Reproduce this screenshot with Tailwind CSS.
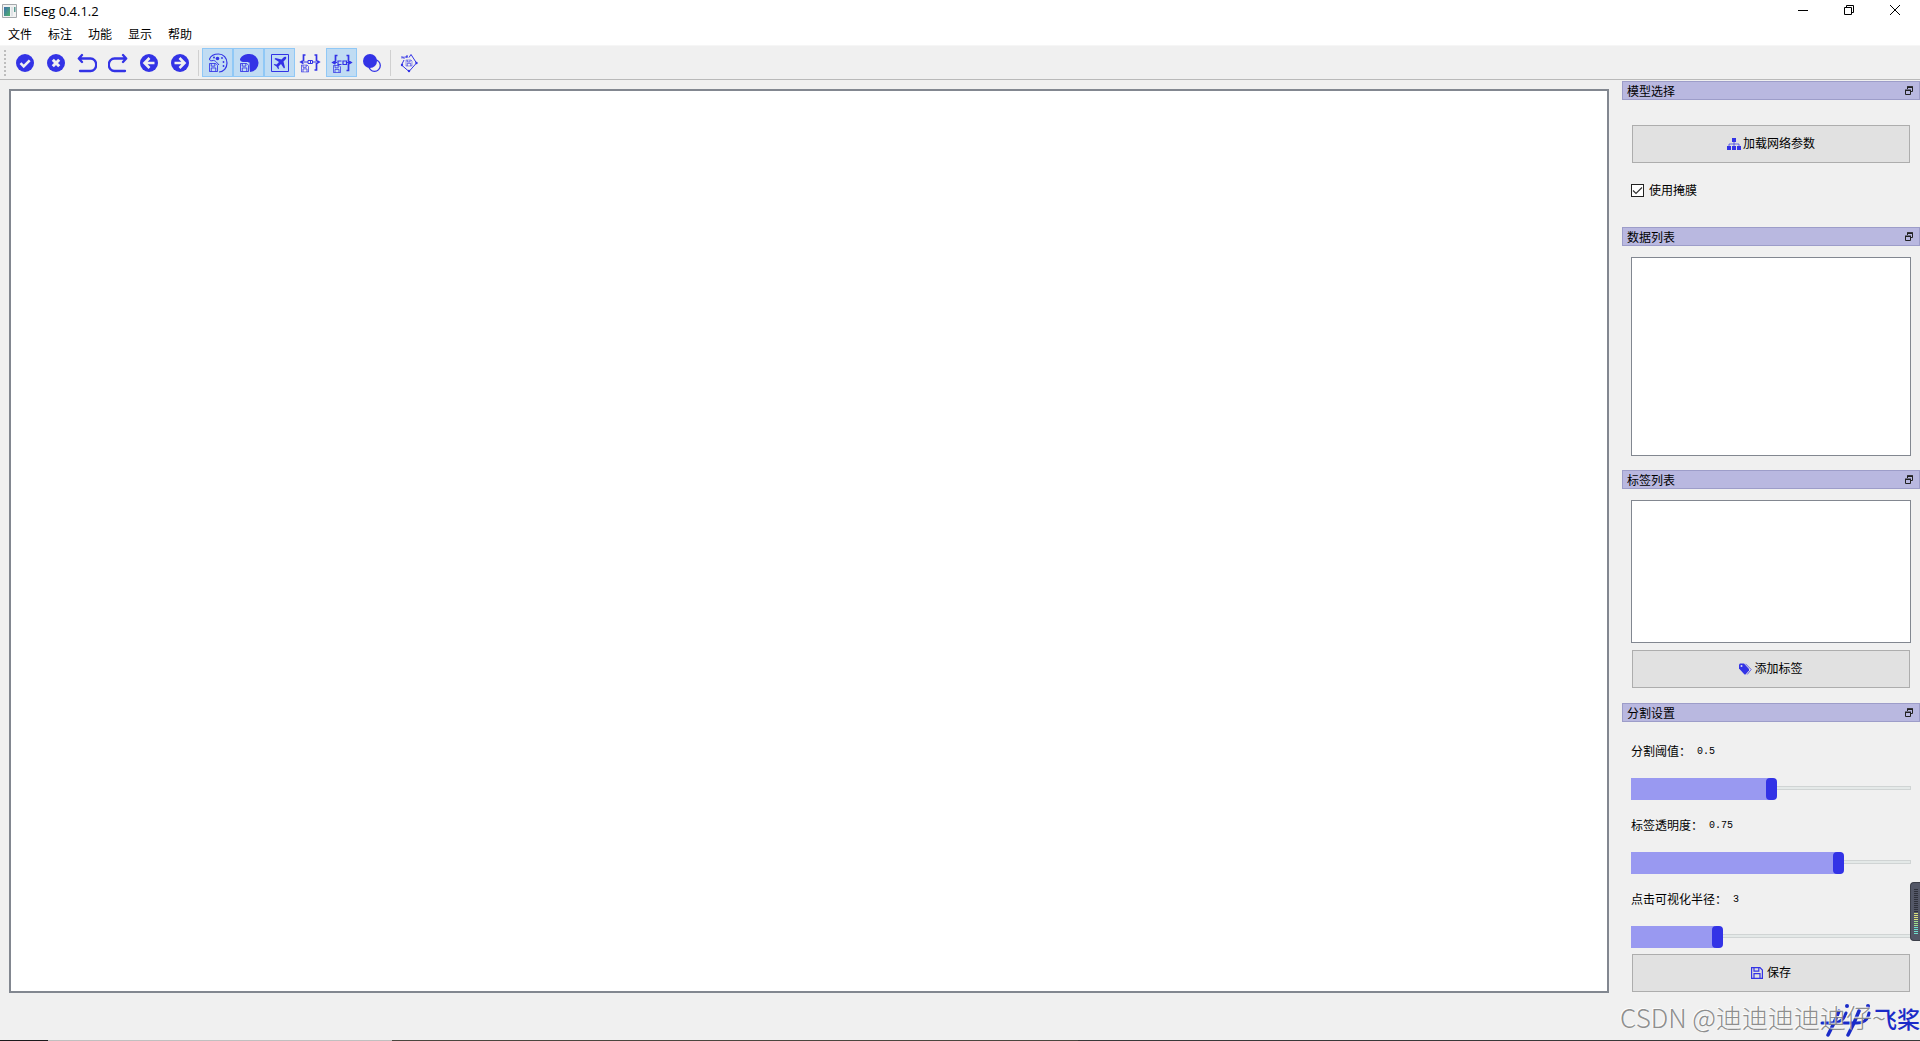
<!DOCTYPE html>
<html lang="zh-CN">

<head>
  <meta charset="UTF-8">
  <meta name="viewport" content="width=device-width, initial-scale=1.0">
  <title>EISeg 0.4.1.2</title>
  <script src="https://cdn.jsdelivr.net/npm/@tailwindcss/browser@4"></script>
</head>

<body class="min-h-screen flex flex-col bg-[#f0f0f0] text-black text-[12px] leading-4 font-['Liberation_Sans','Noto_Sans_CJK_SC',sans-serif]">

  <!-- Shared icon shapes -->
  <svg class="hidden">
    <symbol id="disk" viewBox="0 0 10 10">
      <path d="M.5.5h7l2 2v7h-9zM2.500.5v3h4v-3M2.500 9.500v-4h5v4" fill="none" stroke="#3333e6" stroke-width="1" />
    </symbol>
    <symbol id="float" viewBox="0 0 8 9">
      <path d="M2.500 3V1h5v4.500H6M2 1h6M.5 4.500h5v4h-5zM0 4.500h6" fill="none" stroke="#222" stroke-width="1" />
      <path d="M2 .5h6v1.500H2zM0 3.500h6V5H0z" fill="#222" />
    </symbol>
  </svg>

  <!-- Title bar -->
  <header class="flex h-[22px] items-start bg-white">
    <div class="flex items-center gap-1.5 pl-0.5 pt-[3px]">
      <svg class="w-[15px] h-[14px]" viewBox="0 0 15 14">
        <defs>
          <linearGradient id="app" x1="0" y1="0" x2="1" y2="1">
            <stop offset="0" stop-color="#3f6fae" />
            <stop offset="1" stop-color="#4fb36a" />
          </linearGradient>
        </defs>
        <path d="M.5.5h14v13H.5z" fill="#f2f2f2" stroke="#a5a9ad" />
        <path d="M2 3h6v9H2z" fill="url(#app)" />
        <path d="M9 3h2v9H9z" fill="#dfe3e6" />
        <path d="M12 3h1.500v5H12z" fill="#5a9c94" />
      </svg>
      <h1 class="text-[13px] font-['Open_Sans',sans-serif]">EISeg 0.4.1.2</h1>
    </div>
    <div class="ml-auto flex pr-0.5">
      <button class="flex w-[46px] h-5 items-center justify-center" aria-label="最小化">
        <svg class="w-[10px] h-[10px]" viewBox="0 0 10 10"><path d="M0 5.500h10" stroke="#000" /></svg>
      </button>
      <button class="flex w-[46px] h-5 items-center justify-center" aria-label="还原">
        <svg class="w-[10px] h-[10px]" viewBox="0 0 10 10"><path d="M.5 2.500h7v7h-7zM2.500 2.500v-2h7v7h-2" fill="none" stroke="#000" /></svg>
      </button>
      <button class="flex w-[46px] h-5 items-center justify-center" aria-label="关闭">
        <svg class="w-[10px] h-[10px]" viewBox="0 0 10 10"><path d="M0 0l10 10M10 0L0 10" stroke="#000" /></svg>
      </button>
    </div>
  </header>

  <!-- Menu bar -->
  <nav class="flex h-[23px] items-center gap-4 bg-white px-2 pt-0.5">
    <button>文件</button>
    <button>标注</button>
    <button>功能</button>
    <button>显示</button>
    <button>帮助</button>
  </nav>

  <!-- Toolbar -->
  <div class="flex h-[35px] items-center border-t border-b border-t-[#f6f6f6] border-b-[#b9b9b9] pl-1">
    <svg class="w-1.5 h-[26px]" viewBox="0 0 6 26"><path d="M1 0v26" stroke="#bdbdbd" stroke-width="2" stroke-dasharray="2 2" /></svg>
    <button class="flex w-[31px] h-[29px] items-center justify-center pr-0.5" aria-label="完成">
      <svg class="w-[18px] h-[18px]" viewBox="0 0 18 18">
        <circle cx="9" cy="9" r="9" fill="#3333e6" />
        <path d="M4.500 9.200l3.200 3.200 6-6" fill="none" stroke="#f0f0f0" stroke-width="2.600" />
      </svg>
    </button>
    <button class="flex w-[31px] h-[29px] items-center justify-center pr-0.5" aria-label="清除">
      <svg class="w-[18px] h-[18px]" viewBox="0 0 18 18">
        <circle cx="9" cy="9" r="9" fill="#3333e6" />
        <path d="M5.800 5.800l6.400 6.400M12.200 5.800l-6.400 6.400" stroke="#f0f0f0" stroke-width="3" />
      </svg>
    </button>
    <button class="flex w-[31px] h-[29px] items-center justify-center pr-0.5" aria-label="撤销">
      <svg class="w-[20px] h-[20px]" viewBox="0 0 20 20" fill="none" stroke="#3333e6" stroke-width="2.300" stroke-linecap="round" stroke-linejoin="round">
        <path d="M5 2L1.800 5.500 5 9M2 5.500h11.500a5.500 6 0 0 1 0 12.500H3" />
      </svg>
    </button>
    <button class="flex w-[31px] h-[29px] items-center justify-center pr-0.5" aria-label="重做">
      <svg class="w-[20px] h-[20px]" viewBox="0 0 20 20" fill="none" stroke="#3333e6" stroke-width="2.300" stroke-linecap="round" stroke-linejoin="round">
        <path d="M15 2l3.200 3.500L15 9M18 5.500H6.500a5.500 6 0 0 0 0 12.500H17" />
      </svg>
    </button>
    <button class="flex w-[31px] h-[29px] items-center justify-center pr-0.5" aria-label="上一张">
      <svg class="w-[18px] h-[18px]" viewBox="0 0 18 18">
        <circle cx="9" cy="9" r="9" fill="#3333e6" />
        <path d="M9.500 4L4.500 9l5 5M5 9h9.500" fill="none" stroke="#f0f0f0" stroke-width="2.600" />
      </svg>
    </button>
    <button class="flex w-[31px] h-[29px] items-center justify-center pr-0.5" aria-label="下一张">
      <svg class="w-[18px] h-[18px]" viewBox="0 0 18 18">
        <circle cx="9" cy="9" r="9" fill="#3333e6" />
        <path d="M8.500 4l5 5-5 5M13 9H3.500" fill="none" stroke="#f0f0f0" stroke-width="2.600" />
      </svg>
    </button>
    <span class="ml-0.5 mr-[3px] w-px h-[26px] bg-[#d0d0d0]"></span>
    <button class="flex w-[31px] h-[29px] items-center justify-center border border-[#90c8f6] bg-[#c0dcf3]" aria-label="保存伪彩色图像" aria-pressed="true">
      <svg class="w-[20px] h-[20px]" viewBox="0 0 20 20">
        <path d="M1.500 6C3 2.500 7 1 10.500 1c5 0 8.500 4 8.500 9s-3.500 9-8 9" fill="none" stroke="#3333e6" stroke-width="1.200" />
        <path d="M1.500 6c0 2 2 2 3.500 1.500S8.500 9 11 12" fill="none" stroke="#3333e6" />
        <g fill="#3333e6">
          <circle cx="6" cy="4.500" r="1" />
          <circle cx="9.500" cy="5.500" r="1.800" />
          <circle cx="14" cy="5" r=".9" />
          <circle cx="15.500" cy="9" r=".9" />
          <circle cx="15.500" cy="13" r=".9" />
        </g>
        <use href="#disk" x="1" y="10" width="9" height="9" />
      </svg>
    </button>
    <button class="flex w-[31px] h-[29px] items-center justify-center border border-[#90c8f6] bg-[#c0dcf3]" aria-label="保存灰度图像" aria-pressed="true">
      <svg class="w-[20px] h-[20px]" viewBox="0 0 20 20">
        <path d="M1 6C3 2 7 1 10 1a9 9 0 0 1 1 18L9 9C6 9 1 10 1 6z" fill="#3333e6" />
        <path d="M0 9.500h10.500V20H0z" fill="#c0dcf3" />
        <use href="#disk" x="1" y="10" width="9" height="9" />
      </svg>
    </button>
    <button class="flex w-[31px] h-[29px] items-center justify-center border border-[#90c8f6] bg-[#c0dcf3]" aria-label="保存抠图图像" aria-pressed="true">
      <svg class="w-[18px] h-[18px]" viewBox="0 0 18 18">
        <path d="M.5.5h17v17H.5z" fill="none" stroke="#3333e6" />
        <path d="M15 3c-1-.7-2 0-3 1l-1.500 1.500L4.500 4 3.500 5l4.500 3-2.500 2.500L3.500 10l-.8.800L5.500 12.500 7.200 15.300l.8-.8-.5-2L10 10l3 4.500 1-1-1.500-6L14 6c1-1 1.700-2 1-3z" fill="#3333e6" />
      </svg>
    </button>
    <button class="flex w-[31px] h-[29px] items-center justify-center pr-0.5" aria-label="保存JSON">
      <svg class="w-[22px] h-[20px]" viewBox="0 0 22 20" fill="none">
        <path d="M6.500 2H4.500v5.500L2 9l2.500 1.500M15.500 2h2v5.500L20 9l-2.500 1.500V17h-2" stroke="#3333e6" stroke-width="1.700" />
        <path d="M5 9h4M13.500 9H17M9 7.500h4.500v3H9zM11.500 7.500v3" stroke="#3333e6" />
        <use href="#disk" x="2" y="11.500" width="8" height="8" />
      </svg>
    </button>
    <button class="flex w-[31px] h-[29px] items-center justify-center border border-[#90c8f6] bg-[#c0dcf3]" aria-label="保存COCO" aria-pressed="true">
      <svg class="w-[22px] h-[20px]" viewBox="0 0 22 20" fill="none">
        <path d="M6.500 2.500h-2V8L2 9.500 4.500 11M15.500 2.500h2V8L20 9.500 17.500 11v6.500h-2" stroke="#3333e6" stroke-width="1.700" />
        <path d="M1 9.500h5M10.500 8H7v3.500h3.500M12 8h3.500v3.500H12zM16 9.500h5" stroke="#3333e6" stroke-width="1.200" />
        <use href="#disk" x="2" y="12" width="8" height="8" />
      </svg>
    </button>
    <button class="flex w-[31px] h-[29px] items-center justify-center pr-0.5" aria-label="去背景">
      <svg class="w-[18px] h-[18px]" viewBox="0 0 18 18">
        <circle cx="11.500" cy="11.500" r="5.800" fill="#f0f0f0" stroke="#3333e6" stroke-width="1.300" />
        <circle cx="7" cy="7" r="7" fill="#3333e6" />
      </svg>
    </button>
    <span class="ml-0.5 mr-[3px] w-px h-[26px] bg-[#d0d0d0]"></span>
    <button class="flex w-[31px] h-[29px] items-center justify-center pr-0.5" aria-label="保存">
      <svg class="w-[18px] h-[20px]" viewBox="0 0 18 20" fill="none">
        <path d="M11 1.500L16.500 10 9 18.500 1.500 12 4 7" stroke="#3333e6" stroke-width="1" />
        <path d="M2 5.500v-2l2 2v-2M6 5V3h2M6 4h2M9 4.500l2-3" stroke="#3333e6" stroke-width="1" />
        <circle cx="2" cy="12" r="1.200" fill="#3333e6" />
        <circle cx="9" cy="18" r="1.200" fill="#3333e6" />
        <circle cx="16.500" cy="10" r="1.200" fill="#3333e6" />
        <use href="#disk" x="5.500" y="6.500" width="7" height="7" />
      </svg>
    </button>
  </div>

  <main class="flex flex-1">
    <!-- Canvas -->
    <section class="mt-[9px] ml-[9px] mr-[13px] min-w-0 flex-1 border-2 border-[#828790] bg-white" aria-label="画布"></section>

    <!-- Dock panels -->
    <aside class="w-[298px] shrink-0 pt-px">
      <section>
        <div class="flex h-[19px] items-center justify-between border border-[#9d9dc9] bg-[#b9b8e0] pl-1 pr-1.5">
          <h2 class="pt-0.5">模型选择</h2>
          <button aria-label="浮动"><svg class="w-2 h-[9px]"><use href="#float" /></svg></button>
        </div>
        <div class="px-[10px] pt-[25px] pb-[30px]">
          <button class="flex w-full h-[38px] items-center justify-center gap-0.5 border border-[#adadad] bg-[#e1e1e1]">
            <svg class="w-[14px] h-3" viewBox="0 0 14 12">
              <path d="M5 0h4v4H5zM0 8h4v4H0zM5 8h4v4H5zM10 8h4v4h-4z" fill="#3333e6" />
              <path d="M7 4v4M2 8V6h10v2" fill="none" stroke="#3333e6" stroke-opacity=".7" />
            </svg>
            加载网络参数
          </button>
          <label class="mt-[21px] -ml-px flex h-[13px] items-center gap-[5px]">
            <span class="grid">
              <input type="checkbox" checked class="peer [grid-area:1/1] w-[13px] h-[13px] appearance-none border border-[#222] bg-white">
              <svg class="[grid-area:1/1] hidden peer-checked:block w-[13px] h-[13px] pointer-events-none" viewBox="0 0 13 13"><path d="M2 6.500L5 9.500l6-6" fill="none" stroke="#333" stroke-width="1.200" /></svg>
            </span>
            使用掩膜
          </label>
        </div>
      </section>

      <section>
        <div class="flex h-[19px] items-center justify-between border border-[#9d9dc9] bg-[#b9b8e0] pl-1 pr-1.5">
          <h2 class="pt-0.5">数据列表</h2>
          <button aria-label="浮动"><svg class="w-2 h-[9px]"><use href="#float" /></svg></button>
        </div>
        <div class="px-[9px] pt-[11px] pb-[14px]">
          <ul class="h-[199px] border border-[#828790] bg-white"></ul>
        </div>
      </section>

      <section>
        <div class="flex h-[19px] items-center justify-between border border-[#9d9dc9] bg-[#b9b8e0] pl-1 pr-1.5">
          <h2 class="pt-0.5">标签列表</h2>
          <button aria-label="浮动"><svg class="w-2 h-[9px]"><use href="#float" /></svg></button>
        </div>
        <div class="px-[9px] pt-[11px] pb-[15px]">
          <ul class="h-[143px] border border-[#828790] bg-white"></ul>
          <div class="px-px pt-[7px]">
            <button class="flex w-full h-[38px] items-center justify-center gap-0.5 border border-[#adadad] bg-[#e1e1e1]">
              <svg class="w-[13px] h-3" viewBox="0 0 13 12">
                <path d="M0 1.500L1 .5h4l5 5.500v1.500L6.500 11.500H5.500L0 5.500z" fill="#3333e6" />
                <path d="M6.500.8l5.700 5.700-4 5" fill="none" stroke="#3333e6" stroke-opacity=".7" />
                <circle cx="2.500" cy="3" r="1" fill="#e1e1e1" />
              </svg>
              添加标签
            </button>
          </div>
        </div>
      </section>

      <section>
        <div class="flex h-[19px] items-center justify-between border border-[#9d9dc9] bg-[#b9b8e0] pl-1 pr-1.5">
          <h2 class="pt-0.5">分割设置</h2>
          <button aria-label="浮动"><svg class="w-2 h-[9px]"><use href="#float" /></svg></button>
        </div>
        <div class="px-[9px] pt-[22px]">
          <div class="flex flex-col gap-[18px]">
            <label for="threshold" class="flex h-4 items-center">分割阈值：<output class="pl-1.5 font-['Liberation_Mono',monospace] text-[10px]">0.5</output></label>
            <div class="grid h-[22px]">
              <span class="[grid-area:1/1] mt-2 h-1 border border-[#d0d4d4] bg-[#e4e9e8]"></span>
              <span class="[grid-area:1/1] h-[22px] bg-[#9999f1]" style="width: 50%"></span>
              <input id="threshold" type="range" min="0" max="1" step="0.01" value="0.5" class="[grid-area:1/1] w-full h-[22px] appearance-none bg-transparent [&::-webkit-slider-thumb]:appearance-none [&::-webkit-slider-thumb]:w-[11px] [&::-webkit-slider-thumb]:h-[22px] [&::-webkit-slider-thumb]:rounded-[4px] [&::-webkit-slider-thumb]:bg-[#3333e6]">
            </div>
            <label for="opacity" class="flex h-4 items-center">标签透明度：<output class="pl-1.5 font-['Liberation_Mono',monospace] text-[10px]">0.75</output></label>
            <div class="grid h-[22px]">
              <span class="[grid-area:1/1] mt-2 h-1 border border-[#d0d4d4] bg-[#e4e9e8]"></span>
              <span class="[grid-area:1/1] h-[22px] bg-[#9999f1]" style="width: 75%"></span>
              <input id="opacity" type="range" min="0" max="1" step="0.01" value="0.75" class="[grid-area:1/1] w-full h-[22px] appearance-none bg-transparent [&::-webkit-slider-thumb]:appearance-none [&::-webkit-slider-thumb]:w-[11px] [&::-webkit-slider-thumb]:h-[22px] [&::-webkit-slider-thumb]:rounded-[4px] [&::-webkit-slider-thumb]:bg-[#3333e6]">
            </div>
            <label for="radius" class="flex h-4 items-center">点击可视化半径：<output class="pl-1.5 font-['Liberation_Mono',monospace] text-[10px]">3</output></label>
            <div class="grid h-[22px]">
              <span class="[grid-area:1/1] mt-2 h-1 border border-[#d0d4d4] bg-[#e4e9e8]"></span>
              <span class="[grid-area:1/1] h-[22px] bg-[#9999f1]" style="width: 30%"></span>
              <input id="radius" type="range" min="0" max="10" step="1" value="3" class="[grid-area:1/1] w-full h-[22px] appearance-none bg-transparent [&::-webkit-slider-thumb]:appearance-none [&::-webkit-slider-thumb]:w-[11px] [&::-webkit-slider-thumb]:h-[22px] [&::-webkit-slider-thumb]:rounded-[4px] [&::-webkit-slider-thumb]:bg-[#3333e6]">
            </div>
          </div>
          <div class="px-px pt-1.5">
            <button class="flex w-full h-[38px] items-center justify-center gap-1 border border-[#adadad] bg-[#e1e1e1]">
              <svg class="w-3 h-3"><use href="#disk" /></svg>
              保存
            </button>
          </div>
        </div>
      </section>
    </aside>
  </main>

  <!-- Status bar -->
  <footer class="relative h-12 overflow-hidden">
    <div class="absolute right-0 bottom-1 flex items-end text-[#1a2bc8]">
      <svg class="w-[54px] h-[34px]" viewBox="0 0 54 34" fill="none" stroke="#1a2bc8" stroke-linecap="round">
        <path d="M19 8l-5 12-6 12" stroke-width="3.500" />
        <path d="M2 20h10c7 0 12-3 14-10" stroke-width="3" />
        <path d="M39 8l-5 12-6 12" stroke-width="3.500" />
        <path d="M24 20h13c7 0 11-4 12-10" stroke-width="3" />
        <circle cx="27" cy="3" r="2" fill="#1a2bc8" stroke="none" />
        <circle cx="48" cy="3" r="2" fill="#1a2bc8" stroke="none" />
      </svg>
      <strong class="text-[23px] leading-[34px] font-medium">飞桨</strong>
    </div>
    <p class="absolute right-0 bottom-2 w-[300px] whitespace-nowrap font-['Noto_Sans_CJK_SC',sans-serif] text-[26px] leading-8 font-light text-[#808080]/90 [text-shadow:-1px_-1px_0_#ffffffcc]">CSDN @迪迪迪迪迪仔~</p>
    <div class="absolute inset-x-0 bottom-0 flex h-px bg-[#383838]">
      <span class="w-[48px] bg-[#1c1a1c]"></span>
      <span class="w-[344px] bg-[#c0c0c0]"></span>
      <span class="w-[686px] bg-[#4a463e]"></span>
    </div>
  </footer>

  <!-- Level meter docked to the screen edge -->
  <div class="absolute right-0 top-[882px] flex w-[10px] h-[59px] items-center justify-end rounded-l border border-r-0 border-[#3b3e48] bg-[#535766] pr-0.5">
    <svg class="w-1 h-[46px]" viewBox="0 0 4 46">
      <path d="M2 0v24" stroke="#2e303a" stroke-width="4" stroke-dasharray="1 1" />
      <path d="M2 24v8" stroke="#dbe27c" stroke-width="4" stroke-dasharray="1 1" />
      <path d="M2 32v6" stroke="#a0e28c" stroke-width="4" stroke-dasharray="1 1" />
      <path d="M2 38v8" stroke="#6fe0cc" stroke-width="4" stroke-dasharray="1 1" />
    </svg>
  </div>

</body>

</html>
